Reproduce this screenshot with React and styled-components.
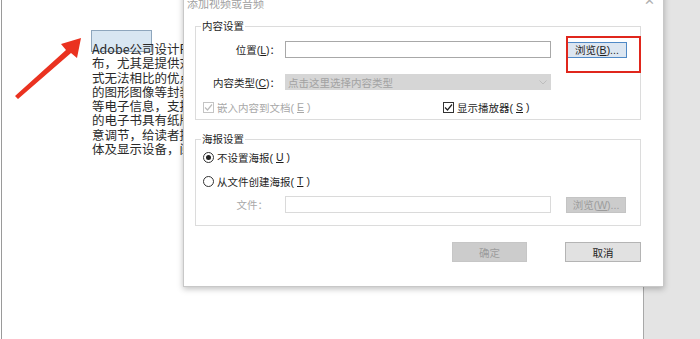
import React from 'react';
import styled, { createGlobalStyle } from 'styled-components';

const Global = createGlobalStyle`
	html, body {
		margin: 0;
		padding: 0;
		background: #fff;
	}
	* {
		box-sizing: border-box;
	}
`;

const Screen = styled.div`
	position: relative;
	display: flex;
	width: 700px;
	height: 339px;
	overflow: hidden;
	background: #fff;
	font-family: 'Liberation Sans', 'Noto Sans CJK SC', sans-serif;
	text-autospace: no-autospace;
`;

const Page = styled.div`
	width: 643px;
	margin-left: 1px;
	border-left: 1px solid #9a9a9a;
	border-right: 1px solid #a8a8a8;
	background: #fff;
	padding: 42px 0 0 90px;
	overflow: hidden;
`;

const Side = styled.div`
	flex: 1;
	background: #e4e4e4;
`;

const DocText = styled.div`
	position: relative;
	font-family: 'Noto Sans CJK SC', serif;
	font-size: 12.5px;
	line-height: 14.3px;
	color: #2a2a2a;
	white-space: nowrap;
`;

const Selection = styled.div`
	position: absolute;
	left: -1px;
	top: -12px;
	width: 61px;
	height: 22px;
	background: rgba(200, 220, 236, 0.7);
	border: 1px solid #8ea6bd;
`;

const Line = styled.div`
	position: relative;
`;

const Arrow = styled.svg`
	position: absolute;
	left: 0;
	top: 0;
`;

const Dialog = styled.div`
	position: absolute;
	left: 183px;
	top: -14px;
	width: 481px;
	height: 301px;
	background: #fff;
	border: 1px solid #c8c8c8;
	box-shadow: 0 2px 6px rgba(0, 0, 0, 0.25);
	display: flex;
	flex-direction: column;
	color: #1e1e1e;
	font-size: 10.5px;
`;

const TitleBar = styled.div`
	display: flex;
	justify-content: space-between;
	align-items: center;
	height: 31px;
	padding: 0 8px 0 3px;
	color: #a0a0a0;
	font-size: 11px;
`;

const Close = styled.span`
	font-size: 13px;
	color: #b0b0b0;
	margin-top: -4px;
`;

const Group = styled.fieldset`
	margin: ${p => p.$top || 0}px 11px 0 11px;
	width: 446px;
	border: 1px solid #dcdcdc;
	padding: ${p => p.$pad};
	min-width: 0;
`;

const Legend = styled.legend`
	margin-left: 5px;
	padding: 0 1px;
	font-size: 10.5px;
	line-height: 16px;
	color: #1e1e1e;
`;

const Row = styled.div`
	display: flex;
	align-items: center;
	height: ${p => p.$h || 16}px;
	margin-top: ${p => p.$mt || 0}px;
	padding-left: ${p => p.$pl || 0}px;
`;

const Label = styled.span`
	width: 89px;
	text-align: right;
	padding-right: ${p => p.$pr || 0}px;
	color: ${p => (p.$dim ? '#a8a8a8' : '#1e1e1e')};
	flex-shrink: 0;
`;

const Input = styled.div`
	width: 266px;
	height: 17px;
	border: 1px solid ${p => (p.$dim ? '#dadada' : '#a8a8a8')};
	background: #fff;
`;

const Select = styled.div`
	display: flex;
	align-items: center;
	justify-content: space-between;
	width: 266px;
	height: 16px;
	background: #d6d6d6;
	color: #a2a2a2;
	padding: 0 4px 0 3px;
	font-size: 10.5px;
`;

const Btn = styled.div`
	display: flex;
	align-items: center;
	justify-content: center;
	width: ${p => p.$w}px;
	height: ${p => p.$h}px;
	margin-left: ${p => p.$ml || 0}px;
	font-size: 10.5px;
	background: ${p => p.$bg};
	border: 1px solid ${p => p.$bd};
	color: ${p => p.$fg};
	flex-shrink: 0;
`;

const Annot = styled.div`
	position: absolute;
	left: 382px;
	top: 49px;
	width: 75px;
	height: 37px;
	border: 2px solid #e0261c;
`;

const Check = styled.span`
	display: inline-flex;
	align-items: center;
	gap: 3px;
	width: ${p => (p.$w ? `${p.$w}px` : 'auto')};
	color: ${p => (p.$dim ? '#a8a8a8' : '#1e1e1e')};
`;

const Box = styled.span`
	width: 11px;
	height: 11px;
	border: 1px solid ${p => (p.$dim ? '#c4c4c4' : '#333')};
	display: inline-flex;
	align-items: center;
	justify-content: center;
`;

const Radio = styled.span`
	width: 11px;
	height: 11px;
	border-radius: 50%;
	border: 1px solid #333;
	display: inline-flex;
	align-items: center;
	justify-content: center;
	&::after {
		content: '';
		width: 5px;
		height: 5px;
		border-radius: 50%;
		background: ${p => (p.$on ? '#222' : 'transparent')};
	}
`;

const Footer = styled.div`
	display: flex;
	justify-content: flex-end;
	margin: 16px 22px 0 0;
`;

const Tick = ({ color }) => (
	<svg width="9" height="9" viewBox="0 0 9 9">
		<path d="M1 4.5 L3.5 7 L8 1.5" fill="none" stroke={color} strokeWidth="1.2" />
	</svg>
);

const lines = [
	'Adobe公司设计PDF文件格式的目的是为了支持跨平台上的，多媒体集成的信息出版和发',
	'布，尤其是提供对网络信息发布的支持。为了达到此目的，PDF具有许多其他电子文档格',
	'式无法相比的优点。PDF文件格式可以将文字、字型、格式、颜色及独立于设备和分辨率',
	'的图形图像等封装在一个文件中。该格式文件还可以包含超文本链接、声音和动态影像',
	'等电子信息，支持特长文件，集成度和安全可靠性都较高。越来越多的电子图书采用PDF格式',
	'的电子书具有纸版书的质感和阅读效果，可以逼真地展现原书的原貌，而显示大小可任',
	'意调节，给读者提供了个性化的阅读方式。由于PDF文件可以不依赖操作系统的语言和字',
	'体及显示设备，阅读起来很方便。'
];

const App = () => {
	return (
		<>
			<Global />
			<Screen>
				<Page>
					<DocText>
						<Selection />
						{lines.map(l => (
							<Line key={l}>{l}</Line>
						))}
					</DocText>
				</Page>
				<Side />
				<Arrow width="100" height="110">
					<polygon points="15,96 66,50 61,44 81,38 77,58 71,53 18,99" fill="#ea3220" />
				</Arrow>
				<Dialog>
					<TitleBar>
						<span>添加视频或音频</span>
						<Close>✕</Close>
					</TitleBar>
					<Group $pad="7px 0 4px 0">
						<Legend>内容设置</Legend>
						<Row $h={17}>
							<Label $pr={5}>
								位置(<u>L</u>)：
							</Label>
							<Input />
							<Btn $w={60} $h={16} $ml={16} $bg="#dce6f1" $bd="#4f89c6" $fg="#1e1e1e">
								浏览(<u>B</u>)...
							</Btn>
						</Row>
						<Row $mt={16}>
							<Label $pr={5}>
								内容类型(<u>C</u>)：
							</Label>
							<Select>
								<span>点击这里选择内容类型</span>
								<svg width="8" height="5" viewBox="0 0 8 5">
									<path d="M0.5 0.5 L4 4 L7.5 0.5" fill="none" stroke="#bdbdbd" strokeWidth="1" />
								</svg>
							</Select>
						</Row>
						<Row $mt={9} $pl={7}>
							<Check $dim $w={240}>
								<Box $dim>
									<Tick color="#bcbcbc" />
								</Box>
								嵌入内容到文档(<u>E</u>)
							</Check>
							<Check>
								<Box>
									<Tick color="#222" />
								</Box>
								显示播放器(<u>S</u>)
							</Check>
						</Row>
					</Group>
					<Group $top={11} $pad="2px 0 12px 0">
						<Legend>海报设置</Legend>
						<Row $pl={7}>
							<Check>
								<Radio $on />
								不设置海报(<u>U</u>)
							</Check>
						</Row>
						<Row $mt={8} $pl={7}>
							<Check>
								<Radio />
								从文件创建海报(<u>T</u>)
							</Check>
						</Row>
						<Row $h={17} $mt={7}>
							<Label $pr={17} $dim>
								文件：
							</Label>
							<Input $dim />
							<Btn $w={60} $h={16} $ml={15} $bg="#cccccc" $bd="#c4c4c4" $fg="#9c9c9c">
								浏览(<u>W</u>)...
							</Btn>
						</Row>
					</Group>
					<Footer>
						<Btn $w={75} $h={20} $bg="#cccccc" $bd="#c6c6c6" $fg="#9c9c9c">
							确定
						</Btn>
						<Btn $w={76} $h={20} $ml={38} $bg="#e1e1e1" $bd="#b4b4b4" $fg="#1e1e1e">
							取消
						</Btn>
					</Footer>
					<Annot />
				</Dialog>
			</Screen>
		</>
	);
};

export default App;
